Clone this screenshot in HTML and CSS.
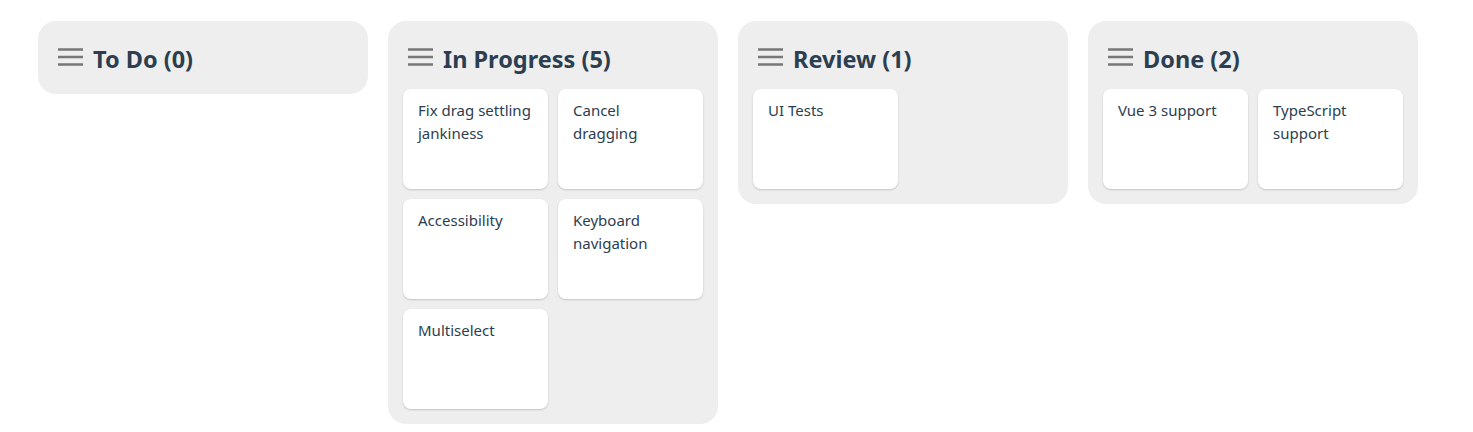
FILE: index.html
```html
<!DOCTYPE html>
<html>
<head>
<meta charset="utf-8">
<link rel="stylesheet" href="styles.css">
</head>
<body>
<div class="board">
  <section class="column">
    <header class="col-header">
      <svg class="handle" width="25" height="20" viewBox="0 0 25 20"><rect x="0" y="0.25" width="25" height="2.5" fill="#777"/><rect x="0" y="7.75" width="25" height="2.5" fill="#777"/><rect x="0" y="15.25" width="25" height="2.5" fill="#777"/></svg>
      <h2 class="col-title">To Do (0)</h2>
    </header>
  </section>
  <section class="column">
    <header class="col-header">
      <svg class="handle" width="25" height="20" viewBox="0 0 25 20"><rect x="0" y="0.25" width="25" height="2.5" fill="#777"/><rect x="0" y="7.75" width="25" height="2.5" fill="#777"/><rect x="0" y="15.25" width="25" height="2.5" fill="#777"/></svg>
      <h2 class="col-title">In Progress (5)</h2>
    </header>
    <div class="cards">
      <div class="card">Fix drag settling jankiness</div>
      <div class="card">Cancel dragging</div>
      <div class="card">Accessibility</div>
      <div class="card">Keyboard navigation</div>
      <div class="card">Multiselect</div>
    </div>
  </section>
  <section class="column">
    <header class="col-header">
      <svg class="handle" width="25" height="20" viewBox="0 0 25 20"><rect x="0" y="0.25" width="25" height="2.5" fill="#777"/><rect x="0" y="7.75" width="25" height="2.5" fill="#777"/><rect x="0" y="15.25" width="25" height="2.5" fill="#777"/></svg>
      <h2 class="col-title">Review (1)</h2>
    </header>
    <div class="cards">
      <div class="card">UI Tests</div>
    </div>
  </section>
  <section class="column">
    <header class="col-header">
      <svg class="handle" width="25" height="20" viewBox="0 0 25 20"><rect x="0" y="0.25" width="25" height="2.5" fill="#777"/><rect x="0" y="7.75" width="25" height="2.5" fill="#777"/><rect x="0" y="15.25" width="25" height="2.5" fill="#777"/></svg>
      <h2 class="col-title">Done (2)</h2>
    </header>
    <div class="cards">
      <div class="card">Vue 3 support</div>
      <div class="card">TypeScript support</div>
    </div>
  </section>
</div>
</body>
</html>
```
FILE: styles.css
```css
html, body {
  margin: 0;
  padding: 0;
  background: #fff;
}
body {
  font-family: "Noto Sans", "Open Sans", sans-serif;
  color: #2c3e50;
}
.board {
  display: flex;
  align-items: flex-start;
  gap: 20px;
  padding: 21px 38px;
}
.column {
  width: 330px;
  box-sizing: border-box;
  background: #eeeeee;
  border-radius: 18px;
  padding: 0 15px 15px;
  display: flex;
  flex-direction: column;
  gap: 10px;
}
.col-header {
  display: flex;
  align-items: center;
  gap: 10px;
  padding: 20px 5px 2px;
  height: 36px;
}
.handle {
  display: block;
  flex: none;
  margin-top: -2px;
}
.col-title {
  margin: 0;
  font-size: 23.5px;
  font-weight: 700;
  line-height: 36px;
  color: #2c3e50;
}
.cards {
  display: grid;
  grid-template-columns: 145px 145px;
  gap: 10px;
}
.card {
  height: 100px;
  box-sizing: border-box;
  background: #fff;
  border-radius: 8px;
  box-shadow: 0 1px 2px rgba(0,0,0,0.18);
  padding: 10px 17px 10px 15px;
  font-size: 15px;
  line-height: 23px;
  color: #2c3e50;
}
```
